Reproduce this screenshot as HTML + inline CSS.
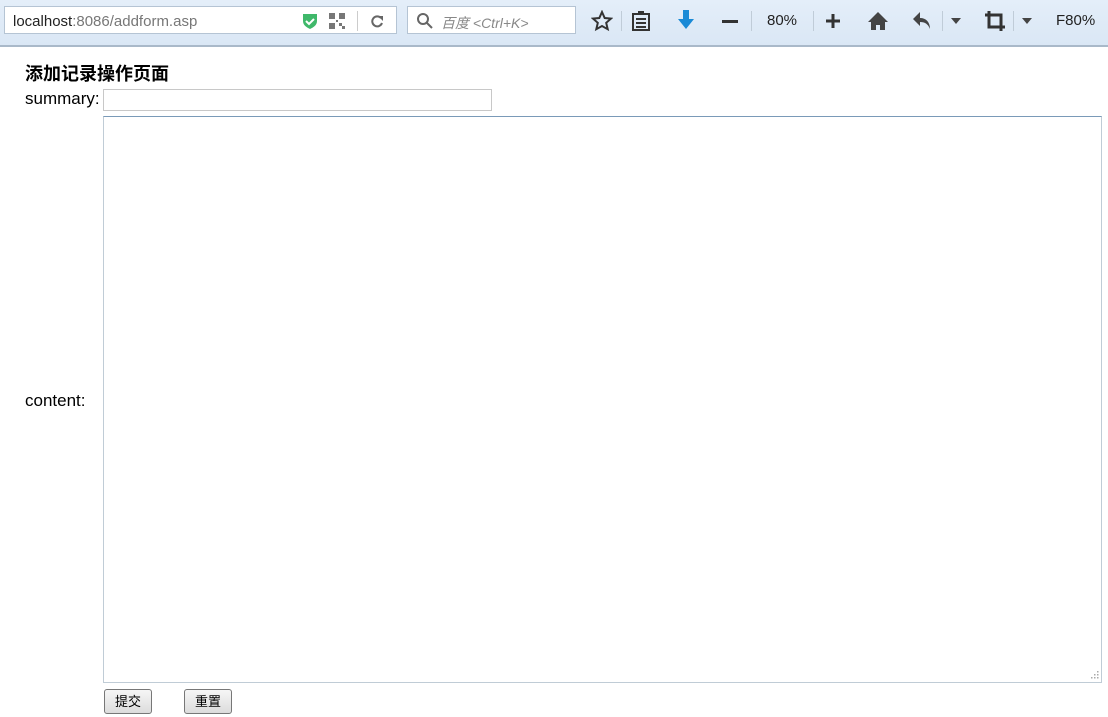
<!DOCTYPE html>
<html><head><meta charset="utf-8">
<style>
body{margin:0;width:1108px;height:717px;overflow:hidden;background:#fff;font-family:"Liberation Sans","Noto Sans CJK SC",sans-serif;position:relative}
.tb{position:absolute;left:0;top:0;width:1108px;height:45px;background:linear-gradient(#e4eef9,#dae7f5);border-bottom:2px solid #a9b9c9}
.url{position:absolute;left:4px;top:6px;width:393px;height:28px;background:#fff;border:1px solid #b5c4d4;box-sizing:border-box}
.url span{position:absolute;left:8px;top:6px;font-size:15px;color:#222}
.srch{position:absolute;left:407px;top:6px;width:169px;height:28px;background:#fff;border:1px solid #b5c4d4;box-sizing:border-box}
.srch span{position:absolute;left:33px;top:6px;font-size:14px;color:#888;font-style:italic}
.t{position:absolute;font-size:15px;color:#222;top:12px}
.sep{position:absolute;top:11px;width:1px;height:20px;background:#c0ccd8}
svg{position:absolute}
.lab{position:absolute;font-size:17px;color:#000}
</style></head><body>
<div class="tb">
 <div class="url"><span>localhost<span style="position:static;color:#777">:8086/addform.asp</span></span>
  <svg style="left:296px;top:5px" width="18" height="18" viewBox="0 0 18 18"><path d="M2 2h14v7c0 4-3 6-7 8-4-2-7-4-7-8z" fill="#3fb86a"/><path d="M5 9l3 3 5-5" stroke="#fff" stroke-width="2" fill="none"/></svg>
  <svg style="left:323px;top:5px" width="18" height="18" viewBox="0 0 18 18" fill="#777"><rect x="1" y="1" width="6" height="6"/><rect x="11" y="1" width="6" height="6"/><rect x="1" y="11" width="6" height="6"/><rect x="11" y="11" width="3" height="3"/><rect x="14" y="14" width="3" height="3"/><rect x="8" y="8" width="2" height="2"/></svg>
  <div style="position:absolute;left:352px;top:4px;width:1px;height:20px;background:#ccc"></div>
  <svg style="left:364px;top:6px" width="16" height="16" viewBox="0 0 16 16"><path d="M12 5a5 5 0 1 0 1 5" stroke="#666" stroke-width="2" fill="none"/><path d="M9 3h5v5z" fill="#666"/></svg>
 </div>
 <div class="srch"><svg style="left:8px;top:5px" width="17" height="17" viewBox="0 0 17 17"><circle cx="7" cy="7" r="5" stroke="#666" stroke-width="2" fill="none"/><path d="M11 11l5 5" stroke="#666" stroke-width="2"/></svg><span>百度 &lt;Ctrl+K&gt;</span></div>
 <svg style="left:591px;top:10px" width="22" height="22" viewBox="0 0 22 22"><path d="M11 2l2.7 6 6.3.6-4.8 4.2 1.5 6.4L11 16l-5.7 3.2 1.5-6.4L2 8.6 8.3 8z" stroke="#333" stroke-width="2" fill="none"/></svg>
 <div class="sep" style="left:621px"></div>
 <svg style="left:631px;top:10px" width="20" height="22" viewBox="0 0 20 22"><rect x="2" y="4" width="16" height="16" fill="none" stroke="#333" stroke-width="2"/><rect x="7" y="1" width="6" height="4" fill="#333"/><path d="M5 9h10M5 13h10M5 17h10" stroke="#333" stroke-width="2"/></svg>
 <svg style="left:676px;top:9px" width="20" height="22" viewBox="0 0 20 22"><path d="M7 1h6v9h5l-8 10-8-10h5z" fill="#1a8ad6"/></svg>
 <div class="t" style="left:722px;top:20px;width:16px;height:3px;background:#333"></div>
 <div class="sep" style="left:751px"></div>
 <div class="t" style="left:767px">80%</div>
 <div class="sep" style="left:813px"></div>
 <svg style="left:825px;top:13px" width="16" height="16" viewBox="0 0 16 16"><path d="M8 1v14M1 8h14" stroke="#333" stroke-width="3"/></svg>
 <svg style="left:867px;top:11px" width="22" height="20" viewBox="0 0 22 20"><path d="M11 1L1 11h3v8h5v-5h4v5h5v-8h3z" fill="#444"/></svg>
 <svg style="left:912px;top:11px" width="22" height="20" viewBox="0 0 22 20"><path d="M8 1L1 8l7 7v-4c5 0 8 2 10 7 0-7-4-11-10-11z" fill="#444"/></svg>
 <div class="sep" style="left:942px"></div>
 <svg style="left:951px;top:18px" width="10" height="6"><path d="M0 0h10L5 6z" fill="#444"/></svg>
 <svg style="left:984px;top:10px" width="22" height="22" viewBox="0 0 22 22"><path d="M5 1v16h16M1 5h16v16" stroke="#333" stroke-width="3" fill="none"/></svg>
 <div class="sep" style="left:1013px"></div>
 <svg style="left:1022px;top:18px" width="10" height="6"><path d="M0 0h10L5 6z" fill="#444"/></svg>
 <div class="t" style="left:1056px">F80%</div>
</div>
<div style="position:absolute;left:25px;top:60px;font-size:18px;font-weight:bold">添加记录操作页面</div>
<div class="lab" style="left:25px;top:89px">summary:</div>
<div style="position:absolute;left:103px;top:89px;width:389px;height:22px;border:1px solid #c8c8c8;box-sizing:border-box"></div>
<div style="position:absolute;left:103px;top:116px;width:999px;height:567px;border:1px solid #c0ccd6;border-top-color:#7a9ab8;box-sizing:border-box"></div>
<svg style="left:1088px;top:669px" width="12" height="12"><g fill="#aaa"><rect x="9" y="2" width="1.5" height="1.5"/><rect x="6" y="5" width="1.5" height="1.5"/><rect x="9" y="5" width="1.5" height="1.5"/><rect x="3" y="8" width="1.5" height="1.5"/><rect x="6" y="8" width="1.5" height="1.5"/><rect x="9" y="8" width="1.5" height="1.5"/></g></svg>
<div class="lab" style="left:25px;top:391px">content:</div>
<div style="position:absolute;left:104px;top:689px;width:48px;height:25px;border:1px solid #777;border-radius:3px;box-sizing:border-box;background:linear-gradient(#f6f6f6,#dcdcdc);font-size:13px;text-align:center;line-height:23px">提交</div>
<div style="position:absolute;left:184px;top:689px;width:48px;height:25px;border:1px solid #777;border-radius:3px;box-sizing:border-box;background:linear-gradient(#f6f6f6,#dcdcdc);font-size:13px;text-align:center;line-height:23px">重置</div>
</body></html>
